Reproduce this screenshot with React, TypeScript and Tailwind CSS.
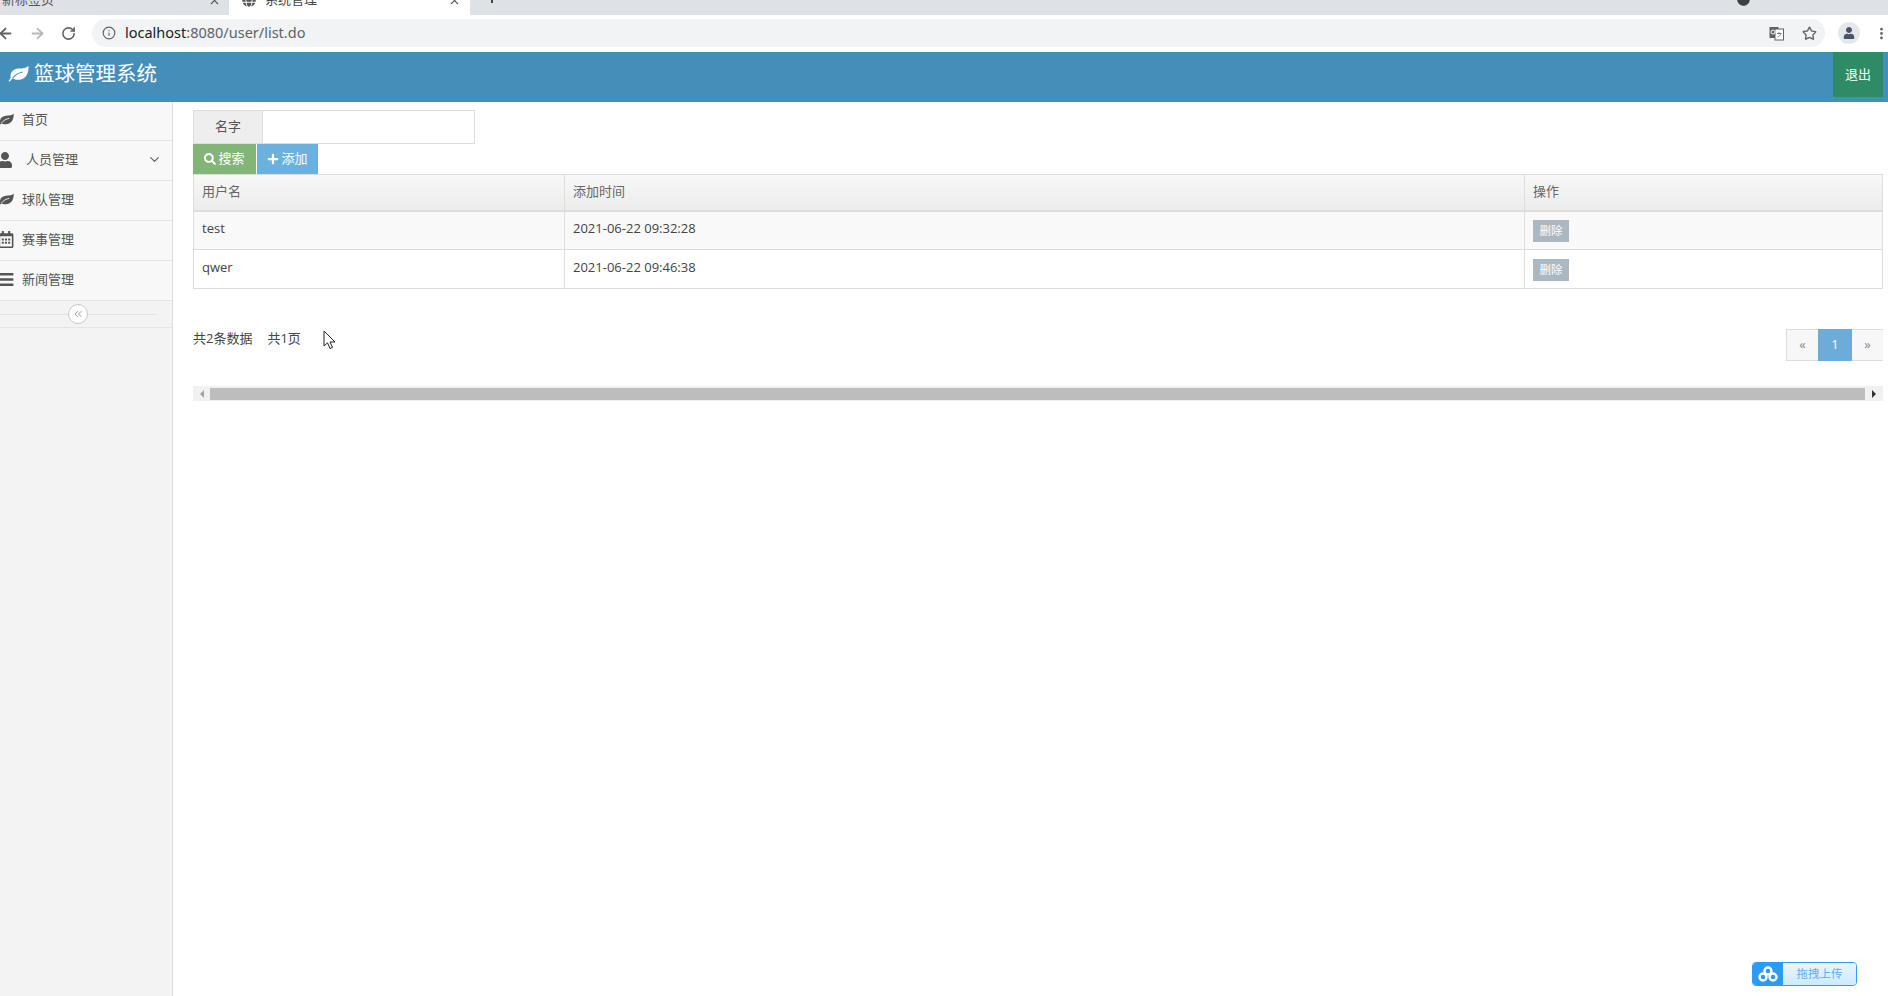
import { ArrowLeft, ArrowRight, ChevronDown, ChevronsLeft, Info, MoreVertical, RotateCw, Star, X } from 'lucide-react';
import { FaRegCalendarAlt, FaBars, FaPlus, FaSearch, FaUser, FaCircle, FaGlobe } from 'react-icons/fa';

const FONT = 'font-["Open_Sans","Noto_Sans_CJK_SC",sans-serif]';

function Leaf({ className, veinClass }: { className: string; veinClass: string }) {
  return (
    <svg className={className} viewBox="0 0 20 16" fill="currentColor">
      <path d="M19.5 0.5 C20 7 17.5 13.5 10 14 C7.5 14.2 5.5 13.6 4.2 12.6 C3.4 13.6 2.6 14.8 1.6 15.6 C0.8 15.8 0.4 15.2 0.8 14.6 C1.4 13.8 2 13 2.6 12.2 C1.6 7 5 3.4 10 3.2 C14 3 17.5 3 19.5 0.5 Z" />
      <path d="M4.5 12.2 C7 9 10 7.4 14 6.6" fill="none" strokeWidth="1.1" className={veinClass} />
    </svg>
  );
}

const navItems = [
  { label: '首页', icon: <Leaf className="w-[16px] h-[13px]" veinClass="stroke-[#f8f8f8]" /> },
  { label: '人员管理', icon: <FaUser className="w-[14px] h-[16px]" />, arrow: true },
  { label: '球队管理', icon: <Leaf className="w-[16px] h-[13px]" veinClass="stroke-[#f8f8f8]" /> },
  { label: '赛事管理', icon: <FaRegCalendarAlt className="w-[16px] h-[17px]" /> },
  { label: '新闻管理', icon: <FaBars className="w-[16px] h-[17px]" /> },
];

const rows = [
  { name: 'test', time: '2021-06-22 09:32:28', striped: true },
  { name: 'qwer', time: '2021-06-22 09:46:38', striped: false },
];

function BrowserChrome() {
  return (
    <div className="shrink-0">
      {/* Tabs, cut off at the top of the capture */}
      <div className="h-[15px] bg-[#dee1e6] flex items-end overflow-hidden relative">
        <div className="w-[229px] h-[30px] shrink-0 flex items-center justify-between pl-[2px] pr-[8px] text-[13px] text-[#555]">
          <span>新标签页</span>
          <X className="w-[13px] h-[13px] text-[#555]" />
        </div>
        <div className="w-[241px] h-[30px] shrink-0 flex items-center gap-[9px] pl-[13px] pr-[9px] bg-white text-[13px] text-[#444]">
          <FaGlobe className="w-[14px] h-[14px] text-[#555]" />
          <span className="flex-1">系统管理</span>
          <X className="w-[13px] h-[13px] text-[#555]" />
        </div>
        <span className="absolute left-[491px] top-[-8px] w-[2px] h-[11px] bg-[#444]" />
        <FaCircle className="absolute left-[1737px] top-[-7px] w-[13px] h-[13px] text-[#3c4043]" />
      </div>
      {/* Toolbar */}
      <div className="h-[37px] bg-white flex items-center pb-[1px]">
        <ArrowLeft strokeWidth={2.5} className="w-[17px] h-[17px] text-[#5f6368] ml-[-3px] shrink-0" />
        <ArrowRight strokeWidth={2.5} className="w-[17px] h-[17px] text-[#b5b8bc] ml-[15px] shrink-0" />
        <RotateCw strokeWidth={2.5} className="w-[15px] h-[15px] text-[#5f6368] ml-[15px] shrink-0" />
        <div className="ml-[16px] w-[1733px] h-[28px] rounded-full bg-[#f1f3f4] flex items-center shrink-0 pl-[10px] pr-[8px]">
          <Info className="w-[14px] h-[14px] text-[#5f6368]" />
          <span className="ml-[9px] text-[14.5px] text-[#202124] font-['Noto_Sans',sans-serif]">
            localhost<span className="text-[#5f6368]">:8080/user/list.do</span>
          </span>
          <svg className="ml-auto" width="15" height="15" viewBox="0 0 15 15">
            <rect x="0.5" y="1" width="9" height="11" fill="#5f6368" />
            <rect x="6" y="3" width="8.5" height="11" fill="#fff" stroke="#5f6368" strokeWidth="1" />
            <circle cx="4" cy="6" r="2" fill="none" stroke="#fff" strokeWidth="1" />
            <path d="M8 7.5h4.5M10 6v1.5M12 7.5c-.5 2-2 3-3.5 3.5" fill="none" stroke="#5f6368" strokeWidth="0.8" />
          </svg>
          <Star strokeWidth={2.2} className="w-[15px] h-[15px] text-[#5f6368] ml-[18px]" />
        </div>
        <div className="ml-[13px] w-[22px] h-[22px] rounded-full bg-[#e4e7ec] flex items-center justify-center shrink-0">
          <FaUser className="w-[12px] h-[12px] text-[#4a5568]" />
        </div>
        <MoreVertical strokeWidth={2.5} className="w-[15px] h-[15px] text-[#5f6368] ml-[14px] shrink-0" />
      </div>
    </div>
  );
}

function Sidebar() {
  return (
    <aside className="w-[173px] shrink-0 bg-[#f3f3f3] border-r border-[#dcdcdc] text-[13px] text-[#555]">
      {navItems.map((item, i) => (
        <div key={item.label} className={`flex items-center bg-[#f8f8f8] border-b border-[#e5e5e5] ${i === 0 ? 'h-[39px] pb-[3px]' : 'h-[40px] pb-[2px]'}`}>
          <span className="w-[22px] ml-[-2px] mr-[2px] text-[#555] flex">{item.icon}</span>
          <span className={item.arrow ? 'ml-[4px]' : ''}>{item.label}</span>
          {item.arrow && <ChevronDown className="w-[15px] h-[15px] ml-auto mr-[10px] text-[#666]" />}
        </div>
      ))}
      <div className="h-[27px] flex items-center pl-[68px] relative border-b border-[#e5e5e5]">
        <div className="absolute left-0 right-[16px] top-[13px] border-t border-[#e2e2e2]" />
        <span className="relative w-[20px] h-[20px] rounded-full border border-[#c8c8c8] bg-white flex items-center justify-center">
          <ChevronsLeft className="w-[12px] h-[12px] text-[#999]" />
        </span>
      </div>
    </aside>
  );
}

function UserTable() {
  return (
    <div className="border border-[#ddd] text-[13px] text-[#444]">
      <div className="flex h-[37px] bg-gradient-to-b from-[#f8f8f8] to-[#ececec] border-b-2 border-[#ddd] text-[#666]">
        <div className="w-[370px] flex items-center pl-[8px] pb-[2px]">用户名</div>
        <div className="w-[960px] flex items-center pl-[8px] pb-[2px] border-l border-[#ddd]">添加时间</div>
        <div className="flex-1 flex items-center pl-[8px] pb-[2px] border-l border-[#ddd]">操作</div>
      </div>
      {rows.map((r, i) => (
        <div key={r.name} className={`flex h-[38px] ${r.striped ? 'bg-[#f9f9f9]' : 'bg-white'} ${i === 0 ? 'border-b border-[#ddd]' : ''}`}>
          <div className={`w-[370px] flex items-center pl-[8px] ${i === 0 ? 'pb-[4px]' : 'pb-[2px]'}`}>{r.name}</div>
          <div className={`w-[960px] flex items-center pl-[8px] border-l border-[#ddd] ${i === 0 ? 'pb-[4px]' : 'pb-[2px]'}`}>{r.time}</div>
          <div className="flex-1 flex items-center pl-[8px] border-l border-[#ddd]">
            <span className={`w-[36px] h-[22px] bg-[#abb7c1] text-white text-[11.5px] flex items-center justify-center ${i === 1 ? 'mt-[2px]' : ''}`}>删除</span>
          </div>
        </div>
      ))}
    </div>
  );
}

function Pagination() {
  return (
    <div className="flex h-[32px] text-[13px] border-y border-l border-[#ddd] mt-[-1px]">
      <span className="w-[31px] flex items-center justify-center text-[#888] bg-[#f7f7f7]">«</span>
      <span className="w-[34px] flex items-center justify-center text-white bg-[#6cacd9] my-[-1px]">1</span>
      <span className="w-[31px] flex items-center justify-center text-[#888] bg-[#f7f7f7]">»</span>
    </div>
  );
}

function ScrollBar() {
  return (
    <div className="mt-[24px] h-[15px] bg-[#f1f1f1] flex items-center">
      <span className="w-[17px] flex justify-center">
        <span className="w-0 h-0 border-y-[4px] border-y-transparent border-r-[4px] border-r-[#a3a3a3]" />
      </span>
      <div className="flex-1 h-[12px] bg-[#bdbdbd]" />
      <span className="w-[18px] flex justify-center">
        <span className="w-0 h-0 border-y-[4px] border-y-transparent border-l-[4px] border-l-[#333]" />
      </span>
    </div>
  );
}

export default function App() {
  return (
    <div className={`h-[996px] w-[1888px] overflow-hidden bg-white flex flex-col relative ${FONT}`}>
      <BrowserChrome />

      <header className="h-[50px] shrink-0 bg-[#448eba] flex items-start justify-between pr-[5px]">
        <div className="h-[43px] flex items-center pl-[8px] text-white text-[20.5px]">
          <Leaf className="w-[21px] h-[17px] mr-[5px]" veinClass="stroke-[#448eba]" />
          <span>篮球管理系统</span>
        </div>
        <button className="w-[50px] h-[45px] bg-[#2e8b65] text-white text-[13px]">退出</button>
      </header>

      <div className="flex-1 flex min-h-0">
        <Sidebar />
        <main className="flex-1 pl-[20px] pr-[5px] pt-[8px] text-[13px] text-[#444] min-w-0">
          <div className="flex w-[282px] h-[34px] border border-[#ddd]">
            <div className="w-[69px] bg-[#eee] border-r border-[#ddd] flex items-center justify-center text-[#555]">名字</div>
            <div className="flex-1 bg-white" />
          </div>
          <div className="flex h-[30px] gap-[1px]">
            <button className="w-[63px] bg-[#82b577] text-white flex items-center justify-center gap-[2px]">
              <FaSearch className="w-[12px] h-[12px]" />搜索
            </button>
            <button className="w-[61px] bg-[#6cb0de] text-white flex items-center justify-center gap-[2px]">
              <FaPlus className="w-[12px] h-[12px]" />添加
            </button>
          </div>
          <UserTable />
          <div className="flex items-start justify-between mt-[41px] h-[32px]">
            <div className="flex gap-[15px] h-[18px] items-center">
              <span>共2条数据</span>
              <span>共1页</span>
            </div>
            <Pagination />
          </div>
          <ScrollBar />
        </main>
      </div>

      {/* mouse cursor */}
      <svg className="absolute left-[323px] top-[330px]" width="14" height="20" viewBox="0 0 14 20">
        <path d="M1 1 L1 16 L4.5 12.8 L7 18.5 L9.5 17.4 L7 12 L12 12 Z" fill="#fff" stroke="#222" strokeWidth="1" />
      </svg>

      {/* upload widget */}
      <div className="absolute left-[1752px] top-[962px] w-[105px] h-[24px] rounded-[4px] border border-[#2b9bf4] flex overflow-hidden">
        <div className="w-[30px] bg-[#2b9bf4] flex items-center justify-center">
          <svg width="20" height="16" viewBox="0 0 20 16">
            <circle cx="10" cy="5" r="3.5" fill="none" stroke="#fff" strokeWidth="2.4" />
            <circle cx="5" cy="11" r="3.5" fill="none" stroke="#fff" strokeWidth="2.4" />
            <circle cx="15" cy="11" r="3.5" fill="none" stroke="#fff" strokeWidth="2.4" />
          </svg>
        </div>
        <div className="flex-1 bg-gradient-to-b from-[#eaf6ff] to-[#cfe9ff] text-[#5cb0ef] text-[11.5px] flex items-center justify-center">拖拽上传</div>
      </div>
    </div>
  );
}
